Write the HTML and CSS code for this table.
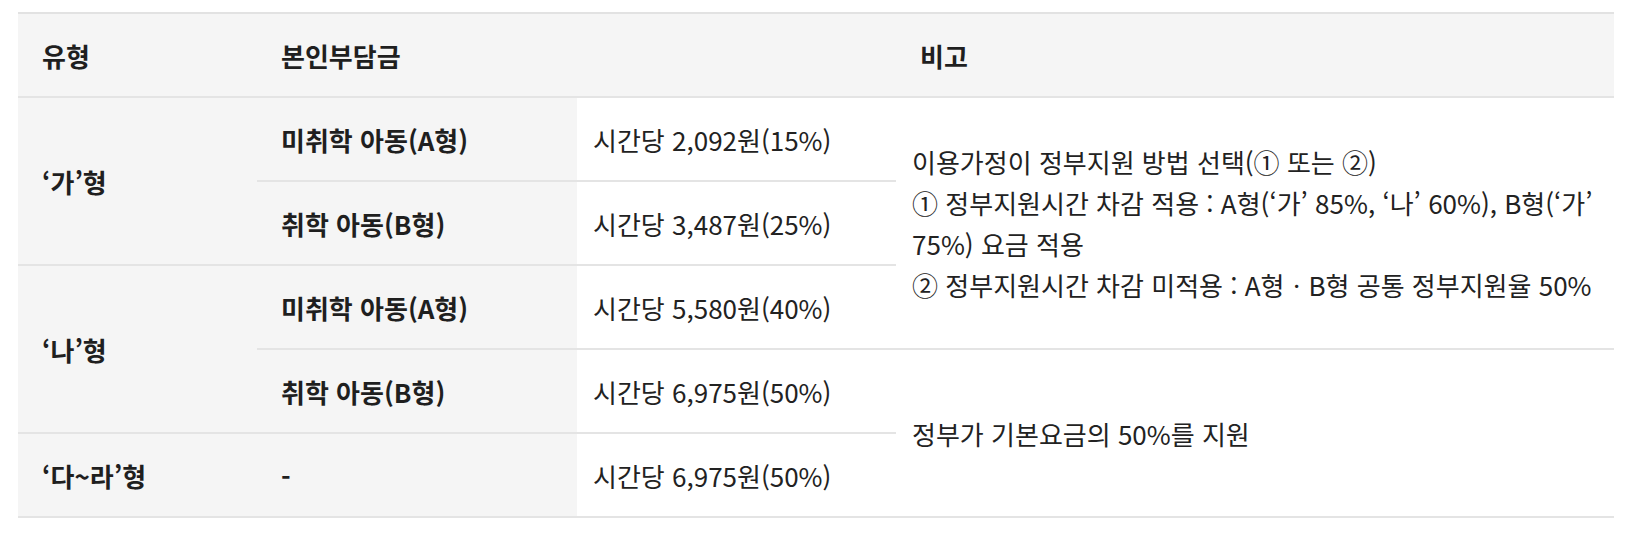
FILE: index.html
```html
<!DOCTYPE html>
<html lang="ko">
<head>
<meta charset="utf-8">
<title>본인부담금</title>
<link rel="stylesheet" href="styles.css">
</head>
<body>
<table class="fee-table">
  <colgroup>
    <col class="c-type">
    <col class="c-sub">
    <col class="c-cost">
    <col class="c-note">
  </colgroup>
  <thead>
    <tr>
      <th>유형</th>
      <th colspan="2">본인부담금</th>
      <th>비고</th>
    </tr>
  </thead>
  <tbody>
    <tr>
      <th rowspan="2">‘가’형</th>
      <th>미취학 아동(A형)</th>
      <td class="cost">시간당 2,092원(15%)</td>
      <td class="note" rowspan="3">이용가정이 정부지원 방법 선택(① 또는 ②)<br>① 정부지원시간 차감 적용 : A형(‘가’ 85%, ‘나’ 60%), B형(‘가’<br>75%) 요금 적용<br>② 정부지원시간 차감 미적용 : A형ㆍB형 공통 정부지원율 50%</td>
    </tr>
    <tr>
      <th>취학 아동(B형)</th>
      <td class="cost">시간당 3,487원(25%)</td>
    </tr>
    <tr>
      <th rowspan="2">‘나’형</th>
      <th>미취학 아동(A형)</th>
      <td class="cost">시간당 5,580원(40%)</td>
    </tr>
    <tr>
      <th>취학 아동(B형)</th>
      <td class="cost">시간당 6,975원(50%)</td>
      <td class="note" rowspan="2">정부가 기본요금의 50%를 지원</td>
    </tr>
    <tr>
      <th>‘다~라’형</th>
      <th>-</th>
      <td class="cost">시간당 6,975원(50%)</td>
    </tr>
  </tbody>
</table>
</body>
</html>
```
FILE: styles.css
```css
html, body {
  margin: 0;
  padding: 0;
  background: #ffffff;
}

body {
  padding: 12px 14px 0 18px;
  font-family: "Noto Sans CJK KR", "Noto Sans", sans-serif;
  font-size: 26px;
  color: #222222;
}

.fee-table {
  width: 1596px;
  table-layout: fixed;
  border-collapse: collapse;
  border-spacing: 0;
  border-top: 2px solid #e2e2e2;
}

.c-type { width: 239px; }
.c-sub { width: 320px; }
.c-cost { width: 319px; }
.c-note { width: 718px; }

.fee-table tr {
  height: 84px;
}

.fee-table th,
.fee-table td {
  border-bottom: 2px solid #e4e4e4;
  vertical-align: middle;
  text-align: left;
  line-height: 41px;
}

.fee-table th {
  background: #f5f5f5;
  color: #1f1f1f;
  font-weight: 700;
  padding: 0 16px 0 24px;
}

.fee-table td {
  background: #ffffff;
  font-weight: 400;
  padding: 0 16px 0 16px;
}

.fee-table td.note {
  white-space: nowrap;
}
```
